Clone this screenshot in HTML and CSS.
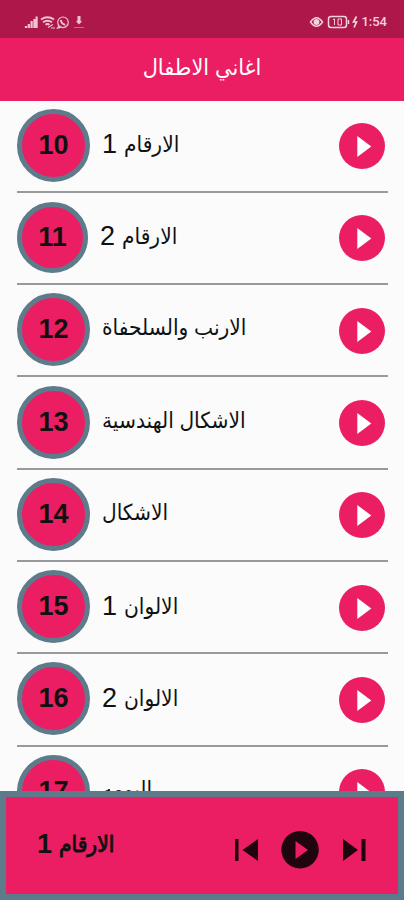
FILE: index.html
```html
<!DOCTYPE html>
<html lang="ar">
<head>
<meta charset="utf-8">
<title>اغاني الاطفال</title>
<link rel="stylesheet" href="styles.css">
</head>
<body>
<svg class="defs" width="0" height="0">
<symbol id="play" viewBox="0 0 46 46"><circle cx="23" cy="23" r="23" fill="#ec1e63"/><path d="M18.3 13v21l14-10.5z" fill="#fff"/></symbol>
</svg>
<div class="status">
<div class="group">
<svg width="62" height="14" viewBox="0 0 62 14" fill="none" stroke="#eec4d2" stroke-width="1.2">
<path d="M2 11v2M4.800 9v4M7.600 6v7M10.400 4v9M12.600 1.500V13" stroke-width="2.200"/>
<path d="M17 4.500q6.500-4.500 13 0M19 7.300q4.500-3 9 0M21.500 9.700q2-1.300 4 0" stroke-width="1.900"/><path d="M24 12.500l5-3M27 13h4"/>
<circle cx="39" cy="7.300" r="5.300"/><path d="M34.800 11l-1.300 2 3-.7"/><path d="M36.800 5q.5 4 4.500 4.700" stroke-width="2"/>
<path d="M55 1v6" stroke-width="3"/><path d="M52.700 6l2.300 2.500L57.300 6" stroke-width="1.500"/><path d="M50 12.500h10" stroke-width=".8" opacity=".6"/>
</svg>
</div>
<div class="group">
<svg width="50" height="14" viewBox="0 0 50 14" fill="none" stroke="#f2d3dd" stroke-width="1.5">
<path d="M1.500 7q6-8.500 12 0q-6 8.500-12 0z"/><circle cx="7.500" cy="7" r="2.200" fill="#f2d3dd"/>
<rect x="19.500" y="1.500" width="18" height="11" rx="2.500"/><path d="M39.500 5v4"/><path d="M24 4.500l1.500-.5v6M29 4h3.500v6H29z" stroke-width="1"/><path d="M47.500 1.500L44.500 7h3L45 12.500" stroke-width="1.700"/>
</svg><span class="clock">1:54</span>
</div>
</div>
<header class="bar"><h1>اغاني الاطفال</h1></header>
<main class="list">
<div class="row"><span class="num">10</span><span class="name"><b>1</b> <i>الارقام</i></span><svg class="play"><use href="#play"/></svg></div>
<div class="row"><span class="num small">11</span><span class="name"><b>2</b> <i>الارقام</i></span><svg class="play"><use href="#play"/></svg></div>
<div class="row"><span class="num">12</span><span class="name"><i>الارنب والسلحفاة</i></span><svg class="play"><use href="#play"/></svg></div>
<div class="row"><span class="num">13</span><span class="name"><i>الاشكال الهندسية</i></span><svg class="play"><use href="#play"/></svg></div>
<div class="row"><span class="num">14</span><span class="name"><i>الاشكال</i></span><svg class="play"><use href="#play"/></svg></div>
<div class="row"><span class="num">15</span><span class="name"><b>1</b> <i>الالوان</i></span><svg class="play"><use href="#play"/></svg></div>
<div class="row"><span class="num">16</span><span class="name"><b>2</b> <i>الالوان</i></span><svg class="play"><use href="#play"/></svg></div>
<div class="row"><span class="num">17</span><span class="name"><i>البومه</i></span><svg class="play"><use href="#play"/></svg></div>
</main>
<footer class="player">
<span class="name now"><b>1</b> <i>الارقام</i></span>
<svg class="controls" width="132" height="38" viewBox="0 0 132 38" fill="#20040e">
<path d="M1 8h3.500v22H1zM24 8v22L8.500 19z"/><path fill-rule="evenodd" d="M66 0a18.700 18.700 0 1 0 .1 0zM61.500 10v18l12.500-9z"/><path d="M109 8v22l15-11zM127.500 8h4v22h-4z"/>
</svg>
</footer>
</body>
</html>
```
FILE: styles.css
```css
* { box-sizing: border-box; }
body { margin: 0; width: 404px; height: 900px; overflow: hidden; display: flex; flex-direction: column; background: #fbfbfb; color: #111; font-family: "Liberation Sans", "DejaVu Sans", sans-serif; }
.defs { display: block; position: absolute; }
.status { flex: none; height: 38px; background: #ad174a; display: flex; justify-content: space-between; padding: 15px 17px 0 24px; }
.group { display: flex; align-items: flex-start; gap: 2px; }
.group svg { display: block; }
.clock { font: 500 13px/14px Roboto, sans-serif; color: #f2d3dd; }
.bar { flex: none; height: 62.500px; background: #ec1e63; }
h1 { margin: 0; text-align: center; font-size: 22px; font-weight: 400; line-height: 60px; color: #fff; direction: rtl; transform: scaleX(.95); }
.list { flex: 1; min-height: 0; overflow: hidden; padding: 0 16px 0 17px; }
.row { height: 92.300px; display: flex; align-items: center; border-bottom: 2px solid #999; }
.num { width: 73px; height: 73px; margin-top: -1px; border: 5px solid #5d7b8b; border-radius: 50%; background: #ec1e63; display: flex; align-items: center; justify-content: center; font-size: 27px; font-weight: 700; }
.small { width: 71px; height: 71px; }
.name { direction: ltr; flex: 1; display: flex; align-items: baseline; gap: 7px; margin: -2px 0 0 12px; font-size: 27px; }
.name b { font-weight: inherit; }
.name i { display: block; font-style: normal; font-size: 22px; transform: translateY(-1px) scaleX(.92); transform-origin: left; }
.play { width: 46px; height: 46px; margin: 1px 3px 0 0; }
.player { flex: none; height: 109px; border: 6px solid #5d7b8b; background: #ec1e63; display: flex; align-items: center; padding: 8px 32px 0 19px; }
.now { font-weight: 700; margin-top: -10px; }
.now i { font-weight: 400; -webkit-text-stroke: 1px #111; }
```
